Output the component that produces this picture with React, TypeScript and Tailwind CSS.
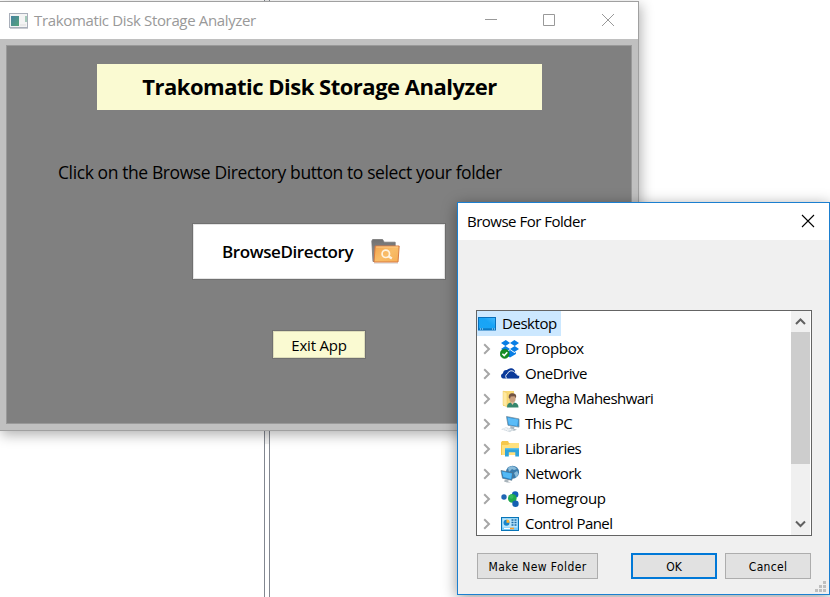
import type { ReactNode } from "react";

const Chevron = () => (
  <svg width="8" height="12" viewBox="0 0 8 12" fill="none" stroke="#a6a6a6" strokeWidth="2">
    <path d="M1.2 1.2 6 6 1.2 10.8" />
  </svg>
);

const DesktopIcon = () => (
  <svg width="18" height="14" viewBox="0 0 18 14">
    <defs>
      <linearGradient id="desk" x1="0" y1="1" x2="1" y2="0">
        <stop offset="0" stopColor="#1ba5f5" />
        <stop offset=".6" stopColor="#18a4f6" />
        <stop offset="1" stopColor="#45b8fb" />
      </linearGradient>
    </defs>
    <rect x=".5" y=".5" width="17" height="12.5" fill="url(#desk)" stroke="#086fbb" />
    <path d="M1 12h16" stroke="#0768b0" />
    <path d="M2 12h1M4 12h1M14 12h1M16 12h1" stroke="#c6eaff" />
  </svg>
);

const DropboxIcon = () => (
  <svg width="20" height="20" viewBox="0 0 20 20">
    <g fill="#087ee5">
      <path d="M5.8 1 10 4 5.4 7 1 4zM14.4 1 19 4l-4.3 3L10 4zM1 10l4.4-3L10 10l-4.3 3zM10 10l4.7-3L19 10l-4.6 3z" />
      <path d="m10 11 4.4 3 1.5-.9v2L10 18.5l-5-3v-2l1 .5z" />
    </g>
    <circle cx="4.7" cy="14.8" r="4.6" fill="#168d22" stroke="#08741a" strokeWidth=".5" />
    <path d="m2.4 14.8 1.8 1.8 3.1-3.4" fill="none" stroke="#fff" strokeWidth="1.5" />
  </svg>
);

const OneDriveIcon = () => (
  <svg width="20" height="20" viewBox="0 0 20 20">
    <path d="M2.8 14.5A2.8 2.8 0 0 1 3 9.2a3.6 3.6 0 0 1 4-3.1 4.8 4.8 0 0 1 8.2 1.2L10 14.5z" fill="#0b3a9a" />
    <path d="M7.7 15a2.8 2.8 0 0 1-.2-5.3A4.1 4.1 0 0 1 15 8.8a3.1 3.1 0 0 1 2.3 2.3 2 2 0 0 1 .9 3.9z" fill="#0b3a9a" stroke="#fff" strokeWidth=".9" />
  </svg>
);

const UserIcon = () => (
  <svg width="20" height="20" viewBox="0 0 20 20">
    <path d="M3 2h11v15H3z" fill="#f9d976" />
    <path d="m3 2 4 2v14l-4-2z" fill="#ffe9a0" stroke="#e6bf51" strokeWidth=".4" />
    <path d="M7 18.5c0-4 2-5 5.5-5s6 1.1 6 5z" fill="#36866d" />
    <path d="m10.5 13 2 3 2-3z" fill="#e5c1a0" />
    <ellipse cx="12.5" cy="9.8" rx="3.1" ry="3.8" fill="#c9a080" />
    <path d="M8.8 9C8.3 5 10.5 4 12.8 4.2c3 .2 4 2.1 3 5l-1.3-2-3.8.4-.7 2.2z" fill="#715344" />
  </svg>
);

const PcIcon = () => (
  <svg width="20" height="20" viewBox="0 0 20 20">
    <path d="m6.5 2.5 12.5 2.4v8.2L8 11.3z" fill="#258bd4" stroke="#7a929f" strokeWidth=".8" />
    <path d="m7.5 3.6 10.6 2-.8 6.4-8.5-1.4z" fill="#5bbcf7" />
    <path d="m10.5 12 4 .7-.5 2 3 1-3 1-4-1z" fill="#aab7bf" />
    <path d="m1 15.2 5-2 8 2-4 3z" fill="#d3dce2" />
    <path d="m3 15.3 4-1.1M5 15.9l4-1.1M7 16.5l4-1.1" stroke="#fff" strokeWidth=".7" />
  </svg>
);

const LibraryIcon = () => (
  <svg width="20" height="20" viewBox="0 0 20 20">
    <path d="M1 3.5 2 2h6l1 2h10v12H1z" fill="#f5c84d" />
    <path d="M2 6h6l2-2h9v12H2z" fill="#ffe17f" />
    <path d="M5 17.5V9.2h14v8.3h-3.7v-4.3H8.8v4.3z" fill="#2ea4dc" />
    <path d="M5 9.2h14v1.2H5z" fill="#62c4f0" />
  </svg>
);

const NetworkIcon = () => (
  <svg width="20" height="20" viewBox="0 0 20 20">
    <circle cx="12.5" cy="8.2" r="6.5" fill="#397aab" />
    <path d="M8 4c3-3 7-2 9 1l-3 1-2-1-3 3zM14 9l3-2c2 2 1 5-1 6.5z" fill="#8abcda" />
    <path d="m1 6.5 12 2.3-1.2 7.5L2.5 14.2z" fill="#2384cb" stroke="#5f7684" strokeWidth=".7" />
    <path d="m2 7.6 10 2-.9 5.3L3.4 13.1z" fill="#54b9f5" />
    <path d="m5 15.4 4 1-1 1.2 3 1-4-.2-3-1z" fill="#a9b4bb" />
  </svg>
);

const HomegroupIcon = () => (
  <svg width="20" height="20" viewBox="0 0 20 20">
    <circle cx="4" cy="8" r="2.7" fill="#2066b4" />
    <circle cx="15.2" cy="5.5" r="3.2" fill="#1261b6" />
    <circle cx="12.3" cy="9.4" r="4.3" fill="#21aa4c" />
    <circle cx="11.5" cy="7.8" r="2" fill="#48c86e" opacity=".6" />
    <circle cx="15.5" cy="14.8" r="3.2" fill="#1561b2" />
  </svg>
);

const ControlIcon = () => (
  <svg width="20" height="20" viewBox="0 0 20 20">
    <rect x="1.5" y="3.5" width="17" height="13" fill="#78cbfa" stroke="#0875b8" />
    <path d="M2.5 4.5h15v9h-15z" fill="#b9e5fc" />
    <circle cx="6.5" cy="8.8" r="3" fill="#1686cd" />
    <path d="M6.5 8.8V5.5a3 3 0 0 1 3 3.3z" fill="#ffb12c" />
    <path d="M11.5 6h2m1 0h2m-5 2.5h2m1 0h2m-5 2.5h2m1 0h2" stroke="#196aa5" strokeWidth="1.4" />
    <path d="M4 14.5h7" stroke="#fff" />
    <path d="M10 14.5h4" stroke="#ff9b21" strokeWidth="1.6" />
  </svg>
);

const FolderSearch = () => (
  <svg width="31" height="27" viewBox="0 0 31 27">
    <defs>
      <linearGradient id="folder" x2="1" y2="1">
        <stop stopColor="#f3a44c" />
        <stop offset=".5" stopColor="#f9bd68" />
        <stop offset="1" stopColor="#f6ae55" />
      </linearGradient>
      <linearGradient id="back" x2="0" y2="1">
        <stop stopColor="#707070" />
        <stop offset="1" stopColor="#999" />
      </linearGradient>
    </defs>
    <path d="M3 24.5h24v1.3H3z" fill="#ddd" />
    <path d="M.8 3 1.6 1.5h10l1.6 2.7h11V12L4 23.5H2z" fill="url(#back)" stroke="#777" strokeWidth=".8" />
    <path d="M4.2 8h24L27 24H3z" fill="url(#folder)" stroke="#d77b42" />
    <path d="M5.2 9h21.8" stroke="#ffd394" strokeWidth=".8" />
    <circle cx="14.8" cy="15.8" r="3.7" fill="none" stroke="#fff3df" strokeWidth="1.7" />
    <path d="m17.5 18.3 3.3 2.2" stroke="#fff3df" strokeWidth="2.3" />
  </svg>
);

const rows: { name: string; icon: ReactNode; spacing: string }[] = [
  { name: "Dropbox", icon: <DropboxIcon />, spacing: "tracking-[-0.35px]" },
  { name: "OneDrive", icon: <OneDriveIcon />, spacing: "tracking-[-0.5px]" },
  { name: "Megha Maheshwari", icon: <UserIcon />, spacing: "tracking-[-0.55px]" },
  { name: "This PC", icon: <PcIcon />, spacing: "tracking-[-0.5px]" },
  { name: "Libraries", icon: <LibraryIcon />, spacing: "tracking-[-0.5px]" },
  { name: "Network", icon: <NetworkIcon />, spacing: "tracking-[-0.5px]" },
  { name: "Homegroup", icon: <HomegroupIcon />, spacing: "tracking-[-0.4px]" },
  { name: "Control Panel", icon: <ControlIcon />, spacing: "tracking-[-0.55px]" },
];

function AppWindow() {
  return (
    <section className="absolute -left-px top-px flex h-[430px] w-[640px] flex-col border border-[#a0a0a0] bg-[#c0c0c0] shadow-[2px_4px_12px_rgba(0,0,0,0.3)]">
      <header className="flex h-[37px] shrink-0 items-center bg-white pl-[9px] text-[#999]">
        <svg width="19" height="16" viewBox="0 0 19 16" className="shrink-0">
          <defs>
            <linearGradient id="app" x2="1" y2="1">
              <stop stopColor="#4682a0" />
              <stop offset="1" stopColor="#55a47a" />
            </linearGradient>
          </defs>
          <rect x=".5" y=".5" width="18" height="14" fill="#f4f4f4" stroke="#a9afba" />
          <path d="M1 15.5h18" stroke="#c9cbd0" />
          <rect x="2" y="3" width="8" height="10" fill="url(#app)" />
          <path d="M17 3v6" stroke="#56a080" />
          <path d="M11 12h6" stroke="#ddd" />
        </svg>
        <span className="mb-[2px] ml-[6px] w-[422px] whitespace-nowrap text-[15px] leading-5 tracking-[-0.35px]">Trakomatic Disk Storage Analyzer</span>
        <svg width="160" height="14" viewBox="0 0 160 14" className="ml-[29px] shrink-0" fill="none" stroke="#999">
          <path d="M0 6.5h12M58.5 1.5h11v11h-11zM117 1l12 12m0-12-12 12" transform="translate(7 -1)" />
        </svg>
      </header>
      <div className="ml-[6px] mt-[6px] flex h-[379px] w-[626px] flex-col border border-[#999] bg-[#808080] text-black">
        <h1 className="ml-[90px] mt-[18px] flex h-[46px] w-[445px] items-center justify-center bg-[#fafad2] pb-[2px] text-[22px] font-bold leading-none tracking-[-0.5px]">
          Trakomatic Disk Storage Analyzer
        </h1>
        <p className="ml-[51px] mt-[50px] h-6 whitespace-nowrap text-[17.5px] leading-6 tracking-[-0.4px]">
          Click on the Browse Directory button to select your folder
        </p>
        <button className="ml-[185px] mt-[39px] flex h-[57px] w-[254px] items-center border border-[#707070] bg-white pl-[29px] text-[17px] font-semibold shadow-[inset_0_0_0_1px_#e4e4e4]">
          <span className="w-[149px] text-left tracking-[-0.4px]">BrowseDirectory</span>
          <FolderSearch />
        </button>
        <button className="ml-[265px] mt-[50px] flex h-[29px] w-[94px] items-center justify-center border border-[#707070] bg-[#fafad2] pt-[2px] text-[15px] tracking-[-0.2px] shadow-[inset_0_0_0_1px_#deddba]">
          Exit App
        </button>
      </div>
    </section>
  );
}

function ScrollBar() {
  return (
    <div className="mr-px flex w-[19px] flex-col items-center bg-[#f0f0f0]">
      <svg width="19" height="21" viewBox="0 0 19 21" fill="none" stroke="#606060" strokeWidth="2">
        <path d="m5 13 4.5-4.5L14 13" />
      </svg>
      <div className="h-[132px] w-full bg-[#cdcdcd]" />
      <svg width="19" height="21" viewBox="0 0 19 21" className="mt-auto" fill="none" stroke="#606060" strokeWidth="2">
        <path d="m5 7.5 4.5 4.5L14 7.5" />
      </svg>
    </div>
  );
}

function FolderDialog() {
  return (
    <section className="absolute left-[457px] top-[202px] flex h-[393px] w-[373px] flex-col border border-[#1b7fd0] bg-[#f0f0f0] shadow-[0_3px_14px_rgba(0,0,0,0.4)]">
      <header className="flex h-[37px] shrink-0 items-center justify-between bg-white pl-[9px] pr-[14px] text-[15px]">
        <span className="tracking-[-0.5px]">Browse For Folder</span>
        <svg width="14" height="14" viewBox="0 0 14 14" className="mb-[2px]" fill="none" stroke="#000" strokeWidth="1.1">
          <path d="m1 1 12 12m0-12L1 13" />
        </svg>
      </header>
      <div className="ml-[18px] mt-[70px] flex h-[226px] w-[336px] shrink-0 justify-between overflow-hidden border border-[#646464] bg-white text-[15px]">
        <ul>
          <li className="flex h-[25px] w-[84px] items-center bg-[#cce8ff] pl-px">
            <DesktopIcon />
            <span className="ml-[6px] tracking-[-0.45px]">Desktop</span>
          </li>
          {rows.map((row) => (
            <li key={row.name} className="flex h-[25px] items-center pl-[6px]">
              <Chevron />
              <span className="ml-[9px]">{row.icon}</span>
              <span className={"ml-[5px] whitespace-nowrap " + row.spacing}>{row.name}</span>
            </li>
          ))}
        </ul>
        <ScrollBar />
      </div>
      <footer className="ml-[19px] mt-[17px] flex h-[26px] font-['DejaVu_Sans_Condensed','DejaVu_Sans',sans-serif] text-[12px]">
        <button className="w-[121px] border border-[#adadad] bg-[#e1e1e1] pt-px tracking-[0.4px]">Make New Folder</button>
        <button className="ml-[33px] w-[86px] border-2 border-[#0078d7] bg-[#e1e1e1] pt-px">OK</button>
        <button className="ml-2 w-[86px] border border-[#adadad] bg-[#e1e1e1] pt-px tracking-[0.3px]">Cancel</button>
      </footer>
      <svg width="11" height="11" viewBox="0 0 11 11" className="absolute bottom-[2px] right-[3px]" fill="#bfbfbf">
        <path d="M8 0h3v3H8zM4 4h3v3H4zM8 4h3v3H8zM0 8h3v3H0zM4 8h3v3H4zM8 8h3v3H8z" />
      </svg>
    </section>
  );
}

export default function App() {
  return (
    <main className="relative h-[597px] w-[830px] overflow-hidden bg-white font-['Open_Sans','Noto_Sans',sans-serif] text-black">
      <div className="flex h-full">
        <div className="w-[264px]" />
        <div className="w-[6px] border-x border-[#828790] bg-white">
          <div className="h-[444px] bg-[#f0f0f0]" />
        </div>
      </div>
      <AppWindow />
      <FolderDialog />
    </main>
  );
}
